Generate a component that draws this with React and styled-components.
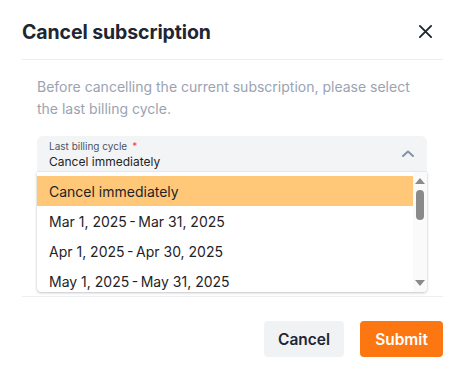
import React from "react";
import styled, { createGlobalStyle } from "styled-components";

const Global = createGlobalStyle`
  html, body { margin: 0; padding: 0; background: #fff; }
  body { font-family: Inter, "Noto Sans", sans-serif; -webkit-font-smoothing: antialiased; }
  * { box-sizing: border-box; }
`;

const Dialog = styled.div`
  width: 462px;
  height: 367px;
  padding: 0 19px 0 22px;
  display: flex;
  flex-direction: column;
  background: #fff;
`;

const Header = styled.div`
  height: 60px;
  display: flex;
  align-items: center;
  justify-content: space-between;
  border-bottom: 1px solid #eceef1;
  padding-top: 4px;
`;

const Title = styled.h2`
  margin: 0;
  font-size: 19.5px;
  font-weight: 700;
  color: #1e2633;
  letter-spacing: -0.1px;
`;

const CloseButton = styled.button`
  border: none;
  background: none;
  padding: 0;
  margin-right: 10px;
  width: 15px;
  height: 15px;
  display: flex;
  color: #1e2633;
`;

const Body = styled.div`
  padding: 16px 16px 4px 15px;
  border-bottom: 1px solid #eceef1;
`;

const Description = styled.p`
  margin: 0 0 17px;
  font-size: 14px;
  line-height: 21.5px;
  color: #9aa3b2;
`;

const SelectField = styled.div`
  height: 36px;
  background: #f3f4f6;
  border-radius: 6px 6px 0 0;
  display: flex;
  align-items: center;
  justify-content: space-between;
  padding: 0 12px 0 12px;
`;

const SelectText = styled.div`
  display: flex;
  flex-direction: column;
  padding-top: 1px;
`;

const Label = styled.span`
  font-size: 10px;
  line-height: 13px;
  color: #4b5563;
`;

const Required = styled.span`
  color: #ef4444;
  margin-left: 5px;
`;

const Value = styled.span`
  font-size: 12px;
  line-height: 17px;
  color: #1f2328;
`;

const List = styled.div`
  height: 120px;
  display: flex;
  background: #fff;
  border-radius: 0 0 4px 4px;
  box-shadow: 0 1px 3px rgba(0, 0, 0, 0.22), 0 0 1px rgba(0, 0, 0, 0.2);
  overflow: hidden;
`;

const Options = styled.div`
  flex: 1;
  padding-top: 4px;
  overflow: hidden;
`;

const Option = styled.div`
  height: 30px;
  display: flex;
  align-items: center;
  padding-left: 12px;
  font-size: 14px;
  color: #1f2328;
  background: ${(p) => (p.$active ? "#fec878" : "transparent")};
`;

const Scrollbar = styled.div`
  width: 14px;
  display: flex;
  flex-direction: column;
  align-items: center;
  padding: 4px 0 4px;
  background: #fafafa;
`;

const Arrow = styled.div`
  width: 0;
  height: 0;
  border-left: 5px solid transparent;
  border-right: 5px solid transparent;
  ${(p) => (p.$up ? "border-bottom: 6px solid #8a8a8a;" : "border-top: 6px solid #8a8a8a;")}
  margin: 2px 0;
`;

const Track = styled.div`
  flex: 1;
  width: 100%;
  display: flex;
  justify-content: center;
  padding-top: 4px;
`;

const Thumb = styled.div`
  width: 8px;
  height: 30px;
  border-radius: 4px;
  background: #8a8a8a;
`;

const Footer = styled.div`
  display: flex;
  justify-content: flex-end;
  gap: 16px;
  padding-top: 24px;
  padding-right: 0;
`;

const Button = styled.button`
  height: 36px;
  width: ${(p) => (p.$primary ? "83px" : "80px")};
  border: none;
  border-radius: 4px;
  padding: 0;
  font-family: inherit;
  font-size: 15.5px;
  font-weight: 600;
  color: ${(p) => (p.$primary ? "#fff" : "#1e2633")};
  background: ${(p) => (p.$primary ? "#fc7712" : "#f1f2f4")};
`;

const options = [
  "Cancel immediately",
  "Mar 1, 2025 - Mar 31, 2025",
  "Apr 1, 2025 - Apr 30, 2025",
  "May 1, 2025 - May 31, 2025",
];

export default function App() {
  return (
    <>
      <Global />
      <Dialog>
        <Header>
          <Title>Cancel subscription</Title>
          <CloseButton aria-label="Close">
            <svg width="15" height="15" viewBox="0 0 16 16" fill="none" stroke="currentColor" strokeWidth="2" strokeLinecap="round">
              <path d="M2 2 L14 14 M14 2 L2 14" />
            </svg>
          </CloseButton>
        </Header>
        <Body>
          <Description>
            Before cancelling the current subscription, please select the last billing cycle.
          </Description>
          <SelectField>
            <SelectText>
              <Label>
                Last billing cycle<Required>*</Required>
              </Label>
              <Value>Cancel immediately</Value>
            </SelectText>
            <svg width="14" height="10" viewBox="0 0 14 10" fill="none" stroke="#8492a6" strokeWidth="2" strokeLinecap="round" strokeLinejoin="round">
              <path d="M2 7 L7 2.5 L12 7" />
            </svg>
          </SelectField>
          <List>
            <Options>
              {options.map((o, i) => (
                <Option key={o} $active={i === 0}>{o.replace(" - ", "\u2009-\u2009")}</Option>
              ))}
            </Options>
            <Scrollbar>
              <Arrow $up />
              <Track><Thumb /></Track>
              <Arrow />
            </Scrollbar>
          </List>
        </Body>
        <Footer>
          <Button>Cancel</Button>
          <Button $primary>Submit</Button>
        </Footer>
      </Dialog>
    </>
  );
}
